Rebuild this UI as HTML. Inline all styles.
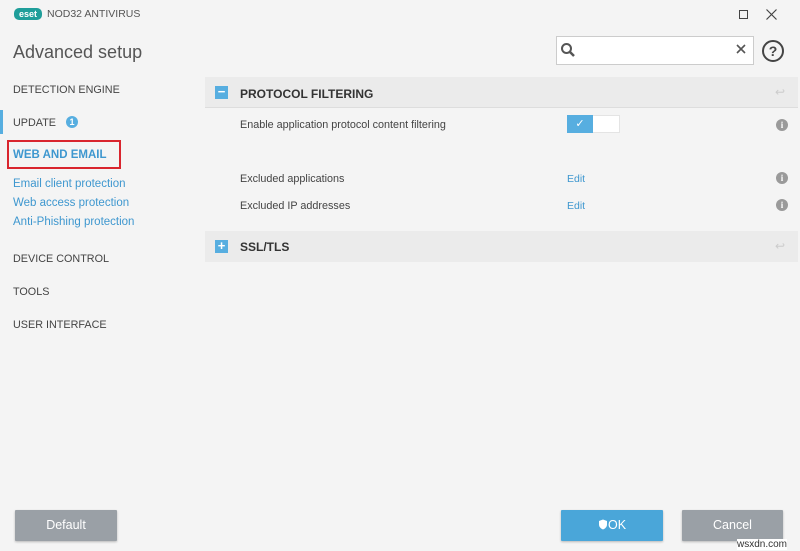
<!DOCTYPE html>
<html><head><meta charset="utf-8"><style>
*{margin:0;padding:0;box-sizing:border-box}
body{width:800px;height:551px;background:#f4f4f4;font-family:"Liberation Sans",sans-serif;position:relative;overflow:hidden;color:#3c3c3c}
.a{position:absolute}
.nav{font-size:10.8px;color:#444}
.sub{font-size:11.5px;color:#3e97cf}
.lbl{font-size:10.8px;color:#444}
.edit{font-size:10.5px;color:#3e97cf}
.info{width:12px;height:12px;border-radius:50%;background:#9a9a9a;color:#fff;font-size:9px;font-weight:bold;text-align:center;line-height:12px;font-family:"Liberation Serif",serif}
.bar{background:#ebebeb;height:31px;left:205px;width:593px}
.sq{width:13px;height:13px;background:#57aee0;color:#fff;font-size:13px;line-height:12px;text-align:center;font-weight:bold}
.btn{height:31px;color:#fff;font-size:12.5px;text-align:center;line-height:31px;border-radius:1px;box-shadow:0 1px 2px rgba(0,0,0,.25)}
</style></head><body>
<div class="a" style="left:14px;top:8px;width:28px;height:12px;background:#1f9e9a;border-radius:5px;color:#fff;font-size:9px;font-weight:bold;line-height:12px;text-align:center">eset</div>
<div class="a" style="left:47px;top:8px;font-size:10.5px;color:#555">NOD32 ANTIVIRUS</div>
<div class="a" style="left:739px;top:10px;width:9px;height:9px;border:1px solid #444"></div>
<svg class="a" style="left:766px;top:9px" width="11" height="11"><path d="M0.5 0.5L10.5 10.5M10.5 0.5L0.5 10.5" stroke="#444" stroke-width="1.2"/></svg>
<div class="a" style="left:13px;top:42px;font-size:18px;color:#555">Advanced setup</div>
<div class="a" style="left:556px;top:36px;width:198px;height:29px;border:1px solid #ccc;background:#fff"></div>
<svg class="a" style="left:560px;top:42px" width="16" height="16"><circle cx="6.5" cy="6.5" r="4.5" fill="none" stroke="#555" stroke-width="2"/><line x1="10" y1="10" x2="14" y2="14" stroke="#555" stroke-width="2.5"/></svg>
<svg class="a" style="left:736px;top:44px" width="10" height="10"><path d="M1 1L9 9M9 1L1 9" stroke="#555" stroke-width="1.6"/></svg>
<div class="a" style="left:762px;top:40px;width:22px;height:22px;border:2px solid #444;border-radius:50%;text-align:center;font-size:14px;line-height:18px;font-weight:bold;color:#444">?</div>
<div class="a nav" style="left:13px;top:84px">DETECTION ENGINE</div>
<div class="a" style="left:0;top:110px;width:3px;height:24px;background:#57aee0"></div>
<div class="a nav" style="left:13px;top:117px">UPDATE</div>
<div class="a" style="left:66px;top:116px;width:12px;height:12px;border-radius:50%;background:#57aee0;color:#fff;font-size:9px;text-align:center;line-height:12px;font-weight:bold">1</div>
<div class="a" style="left:7px;top:140px;width:114px;height:29px;border:2px solid #d9252e"></div>
<div class="a" style="left:13px;top:149px;font-size:11.5px;font-weight:bold;color:#3e97cf">WEB AND EMAIL</div>
<div class="a sub" style="left:13px;top:178px">Email client protection</div>
<div class="a sub" style="left:13px;top:197px">Web access protection</div>
<div class="a sub" style="left:13px;top:216px">Anti-Phishing protection</div>
<div class="a nav" style="left:13px;top:253px">DEVICE CONTROL</div>
<div class="a nav" style="left:13px;top:286px">TOOLS</div>
<div class="a nav" style="left:13px;top:319px">USER INTERFACE</div>
<div class="a bar" style="top:77px;border-bottom:1px solid #ddd"></div>
<div class="a sq" style="left:215px;top:86px">−</div>
<div class="a" style="left:240px;top:87px;font-size:12px;font-weight:bold;color:#333">PROTOCOL FILTERING</div>
<div class="a" style="left:775px;top:85px;color:#ccc;font-size:12px">↩</div>
<div class="a lbl" style="left:240px;top:119px">Enable application protocol content filtering</div>
<div class="a" style="left:567px;top:115px;width:53px;height:18px;background:#fff;border:1px solid #e4e4e4"></div>
<div class="a" style="left:567px;top:115px;width:26px;height:18px;background:#57aee0;color:#fff;font-size:11px;text-align:center;line-height:18px">✓</div>
<div class="a info" style="left:776px;top:119px">i</div>
<div class="a lbl" style="left:240px;top:173px">Excluded applications</div>
<div class="a edit" style="left:567px;top:173px">Edit</div>
<div class="a info" style="left:776px;top:172px">i</div>
<div class="a lbl" style="left:240px;top:200px">Excluded IP addresses</div>
<div class="a edit" style="left:567px;top:200px">Edit</div>
<div class="a info" style="left:776px;top:199px">i</div>
<div class="a bar" style="top:231px"></div>
<div class="a sq" style="left:215px;top:240px">+</div>
<div class="a" style="left:240px;top:240px;font-size:12px;font-weight:bold;color:#333">SSL/TLS</div>
<div class="a" style="left:775px;top:239px;color:#ccc;font-size:12px">↩</div>
<div class="a btn" style="left:15px;top:510px;width:102px;background:#9aa0a6">Default</div>
<div class="a btn" style="left:561px;top:510px;width:102px;background:#4aa6d9"><svg width="10" height="11" style="vertical-align:-1px"><path d="M5 0.5L9 2v3.5C9 8 7 9.8 5 10.5 3 9.8 1 8 1 5.5V2z" fill="#fff"/></svg>OK</div>
<div class="a btn" style="left:682px;top:510px;width:101px;background:#9aa0a6">Cancel</div>
<div class="a" style="left:737px;top:539px;font-size:10px;color:#333;background:#fff">wsxdn.com</div>
</body></html>
